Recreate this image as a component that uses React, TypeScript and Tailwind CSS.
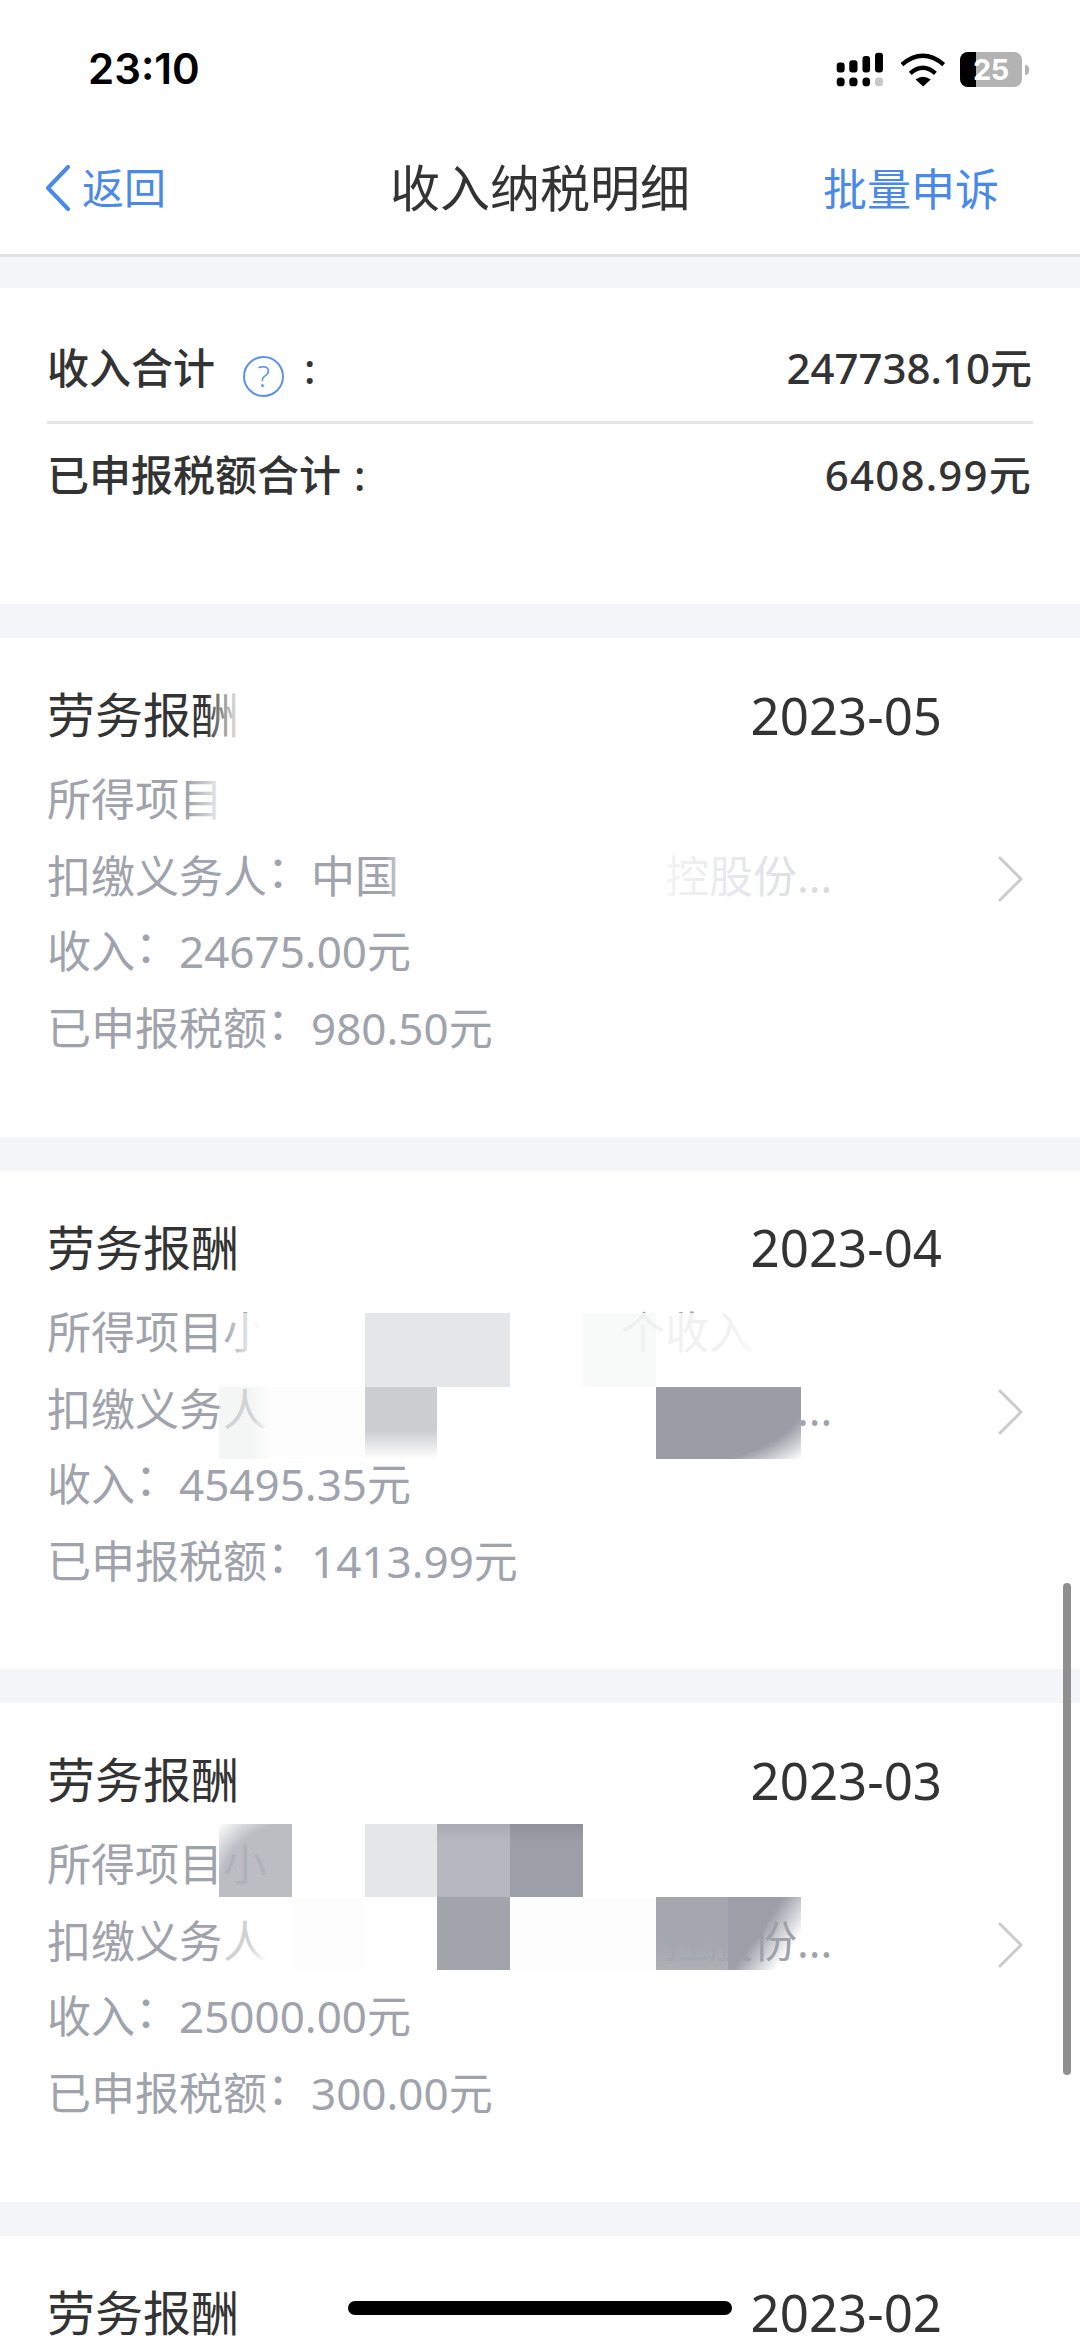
import React from 'react';

const FONT = "font-['Noto_Sans','Noto_Sans_CJK_SC',sans-serif]";

function SignalIcon() {
  return (
    <svg viewBox="105 60 155 112" className="w-[52px] h-[37px]" fill="#000">
      <rect x="112" y="95" width="24" height="30" rx="9" />
      <rect x="150" y="88" width="25" height="37" rx="9" />
      <rect x="190" y="75" width="23" height="50" rx="9" />
      <rect x="228" y="65" width="24" height="60" rx="9" />
      <rect x="112" y="140" width="24" height="27" rx="11" />
      <rect x="150" y="140" width="25" height="27" rx="11" />
      <rect x="190" y="140" width="23" height="27" rx="11" />
      <rect x="228" y="140" width="24" height="27" rx="10" fill="#c8c8c8" />
    </svg>
  );
}

function WifiIcon() {
  return (
    <svg viewBox="295 60 145 107" className="w-[48px] h-[36px]" fill="none" stroke="#000" strokeWidth="13">
      <path d="M304 97 Q367 44 430 97" />
      <path d="M329 124 Q367 90 405 124" />
      <path d="M345 142 Q367 126 391 142 L368 163 Z" fill="#000" stroke="none" />
    </svg>
  );
}

function Battery() {
  return (
    <div className="flex items-center">
      <div className="relative w-[62px] h-[35px] rounded-[8px] bg-[#b3b3b3] overflow-hidden flex items-center justify-center">
        <div className="absolute left-0 top-0 bottom-0 w-[16px] bg-black" />
        <span className="relative text-white font-bold text-[29px] leading-none font-['Inter',sans-serif] tracking-[-0.5px]">25</span>
      </div>
      <div className="ml-[3px] w-[4px] h-[10px] rounded-r-full bg-[#b3b3b3]" />
    </div>
  );
}

function StatusBar() {
  return (
    <div className="h-[100px] flex items-start justify-between pl-[88px] pr-[51px] bg-white">
      <span className="mt-[44px] text-[42px] leading-[50px] font-semibold text-black font-['Inter',sans-serif]">23:10</span>
      <div className="mt-[51px] flex items-center gap-[13px]">
        <SignalIcon />
        <WifiIcon />
        <Battery />
      </div>
    </div>
  );
}

function NavBar() {
  return (
    <div className="h-[157px] pt-[22px] px-[45px] grid grid-cols-[1fr_auto_1fr] items-center bg-white border-b-[3px] border-[#e1e2e6]">
      <div className="flex items-center gap-[11px] text-[#4a89e8]">
        <svg viewBox="0 0 26 46" className="w-[26px] h-[46px]" fill="none" stroke="currentColor" strokeWidth="4" strokeLinecap="round" strokeLinejoin="round">
          <polyline points="23,2 3,23 23,44" />
        </svg>
        <span className="text-[42px] leading-none">返回</span>
      </div>
      <span className="text-[50px] leading-none text-[#333]">收入纳税明细</span>
      <span className="justify-self-end mr-[36px] mt-[1px] text-[44px] leading-none text-[#4a89e8]">批量申诉</span>
    </div>
  );
}

function SummaryCard() {
  return (
    <div className="mt-[31px] mb-[2px] h-[316px] bg-white px-[47px] pt-[50px] text-[42px] font-medium text-[#333]">
      <div className="h-[58px] flex items-center justify-between">
        <div className="flex items-center">
          <span>收入合计</span>
          <span className="ml-[28px] mt-[18px] w-[41px] h-[41px] rounded-full border-2 border-[#5b93e8] flex items-center justify-center text-[#5b93e8] text-[30px] font-light leading-none">?</span>
          <span className="ml-[20px]">:</span>
        </div>
        <span className="mr-[1px]">247738.10元</span>
      </div>
      <div className="mt-[25px] h-[3px] bg-[#e3e4e7]" />
      <div className="mt-[21px] h-[58px] flex items-center justify-between">
        <div className="flex items-center">
          <span>已申报税额合计</span>
          <span className="ml-[13px]">:</span>
        </div>
        <span className="mr-[1px] tracking-[1.2px]">6408.99元</span>
      </div>
    </div>
  );
}

function Colon() {
  // SC puts the colon low in its cell, the reference has it at mid height
  return <span className="inline-block -translate-y-[5px]">：</span>;
}

function Amount({ label, value }: { label: string; value: string }) {
  return (
    <div className="h-[77px] leading-[77px] whitespace-nowrap">
      {label}
      <Colon />
      {value}
    </div>
  );
}

interface CardProps {
  month: string;
  income?: string;
  tax?: string;
  itemRow?: React.ReactNode;
  payerRow?: React.ReactNode;
  children?: React.ReactNode;
}

function IncomeCard({ month, income, tax, itemRow, payerRow, children }: CardProps) {
  return (
    <div className="relative mt-[34px] h-[498.67px] shrink-0 bg-white pl-[47px] pr-[56px] flex items-center">
      <div className="flex-1 self-start pt-[50px]">
        <div className="h-[54px] pr-[56px] flex items-center justify-between text-[#333]">
          <span className="text-[48px] leading-none">劳务报酬</span>
          <span className="text-[51px] leading-none">{month}</span>
        </div>
        {income && tax && (
          <div className="mt-[19px] text-[44px] text-[#a0a3ab]">
            <div className="h-[77px] leading-[77px] whitespace-nowrap">{itemRow}</div>
            <div className="h-[75px] leading-[77px] whitespace-nowrap">{payerRow}</div>
            <Amount label="收入" value={income} />
            <Amount label="已申报税额" value={tax} />
          </div>
        )}
      </div>
      <svg viewBox="0 0 26 46" className="w-[26px] h-[46px] mb-[16px]" fill="none" stroke="#cbcbcf" strokeWidth="3" strokeLinecap="round" strokeLinejoin="round">
        <polyline points="2,2 23,23 2,44" />
      </svg>
      {children}
    </div>
  );
}

const payerText = (
  <>
    扣缴义务人
    <Colon />
    中国
    <span className="inline-block w-[266px]" />
    控股份...
  </>
);

const itemText = (
  <>
    所得项目小
    <span className="inline-block w-[354px]" />
    个收入
  </>
);

export default function App() {
  return (
    <div className={`relative w-[1080px] h-[2337px] overflow-hidden bg-[#f4f5f9] ${FONT}`}>
      <StatusBar />
      <NavBar />
      <SummaryCard />

      <IncomeCard month="2023-05" income="24675.00元" tax="980.50元" itemRow="所得项目" payerRow={payerText}>
        {/* redaction fades over the first record */}
        <div className="absolute left-[206px] top-[50px] w-[36px] h-[54px] bg-gradient-to-r from-transparent to-white" />
        <div className="absolute left-[188px] top-[125px] w-[40px] h-[68px] bg-gradient-to-r from-transparent to-white" />
        <div className="absolute left-[385px] top-[205px] w-[445px] h-[70px] bg-[linear-gradient(to_right,transparent_0%,#fff_7%,#fff_55%,rgba(255,255,255,0.85)_66%,rgba(255,255,255,0.6)_100%)]" />
      </IncomeCard>

      <IncomeCard month="2023-04" income="45495.35元" tax="1413.99元" itemRow={itemText} payerRow={payerText}>
        <div className="absolute left-[219px] top-[142px] w-[582px] grid grid-cols-8 grid-rows-[74px_72px]">
          <div className="bg-[linear-gradient(to_right,transparent_5%,#fff_55%)]" />
          <div className="bg-white" />
          <div className="bg-[#e4e6e8]" />
          <div className="bg-[#e5e6e8]" />
          <div className="bg-white" />
          <div className="bg-[#f7f8f8]/90" />
          <div className="bg-white/85" />
          <div className="bg-[linear-gradient(to_right,rgba(255,255,255,0.85),#fff_55%)]" />
          <div className="bg-[linear-gradient(to_right,#eef0f0a0_45%,#fdfdfd_70%)]" />
          <div className="bg-[#fdfdfd]" />
          <div className="bg-[linear-gradient(to_bottom,#cbcdd1_60%,#fff_100%)]" />
          <div className="bg-white" />
          <div className="bg-white" />
          <div className="bg-white" />
          <div className="col-span-2 bg-[radial-gradient(ellipse_farthest-corner_at_15%_0%,#9a9ca6_76%,#fff_100%)]" />
        </div>
      </IncomeCard>

      <IncomeCard month="2023-03" income="25000.00元" tax="300.00元" itemRow={itemText} payerRow={payerText}>
        <div className="absolute left-[219px] top-[121px] w-[582px] grid grid-cols-8 grid-rows-[73px_73px]">
          <div className="bg-[radial-gradient(ellipse_farthest-corner_at_100%_100%,#b2b4bbe0_72%,#fff_100%)]" />
          <div className="bg-white" />
          <div className="bg-[#e4e6e8]" />
          <div className="bg-[linear-gradient(to_bottom,#a9abb2,#b6b8bf_25%)]" />
          <div className="bg-[linear-gradient(to_bottom,#8e909a,#9c9ea8_25%)]" />
          <div className="bg-white" />
          <div className="bg-white" />
          <div className="bg-white" />
          <div className="bg-[linear-gradient(to_right,rgba(255,255,255,0.5)_40%,#fff_65%)]" />
          <div className="bg-[#fdfdfd]" />
          <div className="bg-white" />
          <div className="bg-[#a1a4ab]" />
          <div className="bg-[#fdfdfd]" />
          <div className="bg-[#fdfdfd]" />
          <div className="bg-[linear-gradient(to_bottom,#a5a7ae_60%,rgba(165,167,174,0.9))]" />
          <div className="bg-[linear-gradient(125deg,#9c9ea8_45%,transparent_80%)]" />
        </div>
      </IncomeCard>

      <IncomeCard month="2023-02" />

      {/* scroll thumb and home indicator sit above the list */}
      <div className="absolute left-[1063px] top-[1583px] w-[8px] h-[492px] rounded-full bg-[#8f8f8f]" />
      <div className="absolute left-[348px] top-[2301px] w-[384px] h-[14px] rounded-full bg-black" />
    </div>
  );
}
